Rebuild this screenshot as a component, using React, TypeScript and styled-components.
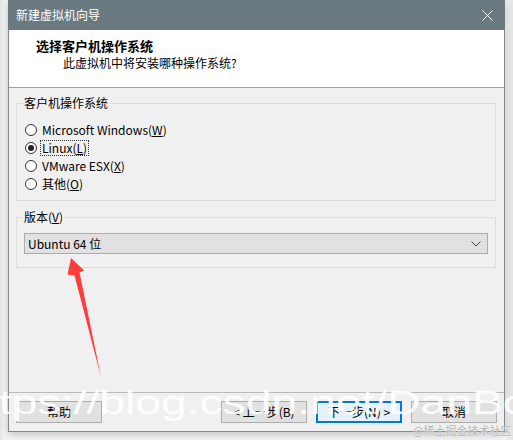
import React from "react";
import styled, { createGlobalStyle } from "styled-components";

const GlobalStyle = createGlobalStyle`
  html, body {
    margin: 0;
    padding: 0;
    background: #ededed;
  }
  body {
    width: 513px;
    height: 440px;
    overflow: hidden;
    font-family: "Noto Sans CJK SC", "Noto Sans", sans-serif;
    color: #000;
  }
`;

const Stage = styled.div`
  position: relative;
  width: 513px;
  height: 440px;
  padding: 0 8px;
  box-sizing: border-box;
  overflow: hidden;
  background: linear-gradient(to right, #e4e4e4, #f4f4f4 4px, #f4f4f4 505px, #e4e4e4);
`;

const Window = styled.div`
  width: 497px;
  height: 432px;
  box-sizing: border-box;
  display: flex;
  flex-direction: column;
  background: #f0f0f0;
  border: 1px solid #7f8b90;
  border-top: none;
  box-shadow: 0 2px 8px rgba(0, 0, 0, 0.22);
`;

const TitleBar = styled.div`
  height: 30px;
  margin: 0 -1px;
  padding: 0 12px 0 8px;
  display: flex;
  align-items: center;
  justify-content: space-between;
  background: #6a7a80;
  color: #fff;
  font-size: 12px;
  line-height: 16px;
`;

const Header = styled.div`
  height: 57px;
  box-sizing: content-box;
  padding-left: 27px;
  background: #fff;
  border-bottom: 1px solid #a0a0a0;
  display: flex;
  flex-direction: column;
`;

const HeadTitle = styled.div`
  margin-top: 8px;
  font-size: 13px;
  font-weight: bold;
  line-height: 16px;
`;

const HeadSub = styled.div`
  margin-top: 1px;
  padding-left: 27px;
  font-size: 12px;
  line-height: 16px;
`;

const Body = styled.div`
  flex: 1;
  display: flex;
  flex-direction: column;
  padding: 8px 8px 0 7px;
`;

const Group = styled.fieldset<{ $gap?: number; $pt: number; $pb: number }>`
  margin: ${(p) => p.$gap ?? 0}px 0 0 0;
  padding: ${(p) => p.$pt}px 7px ${(p) => p.$pb}px 7px;
  border: 1px solid #dcdcdc;
  min-width: 0;
`;

const Legend = styled.legend`
  margin-left: -1px;
  padding: 0 1px;
  font-size: 12px;
  line-height: 14px;
`;

const RadioRow = styled.div`
  height: 18px;
  margin-left: 1px;
  display: flex;
  align-items: center;
  gap: 3px;
  font-size: 12px;
  line-height: 16px;
`;

const RadioDot = styled.span<{ $on?: boolean }>`
  width: 12px;
  height: 12px;
  box-sizing: border-box;
  border: 1px solid #333;
  border-radius: 50%;
  background: #fff;
  display: flex;
  align-items: center;
  justify-content: center;
  &::after {
    content: "";
    width: 6px;
    height: 6px;
    border-radius: 50%;
    background: ${(p) => (p.$on ? "#222" : "transparent")};
  }
`;

const RadioLabel = styled.span<{ $focus?: boolean }>`
  padding: 0 1px;
  border: 1px dotted ${(p) => (p.$focus ? "#333" : "transparent")};
  line-height: 14px;
`;

const Select = styled.div`
  height: 21px;
  box-sizing: border-box;
  padding: 0 6px 0 3px;
  display: flex;
  align-items: center;
  justify-content: space-between;
  background: #e1e1e1;
  border: 1px solid #adadad;
  font-size: 12px;
  line-height: 16px;
`;

const Spacer = styled.div`
  flex: 1;
`;

const Footer = styled.div`
  display: flex;
  align-items: center;
  gap: 9px;
  padding: 8px 7px 8px 7px;
  border-top: 1px solid #b9b9b9;
`;

const Button = styled.div<{ $default?: boolean }>`
  width: 86px;
  height: 22px;
  box-sizing: border-box;
  display: flex;
  align-items: center;
  justify-content: center;
  background: ${(p) => (p.$default ? "#e5f1fb" : "#e1e1e1")};
  border: ${(p) => (p.$default ? "2px solid #0078d7" : "1px solid #adadad")};
  font-size: 12px;
  line-height: 16px;
  &:first-child {
    margin-right: auto;
  }
`;

const Watermark = styled.div`
  position: absolute;
  left: -1px;
  top: 385px;
  font-family: "Liberation Sans", Arial, sans-serif;
  font-size: 34px;
  line-height: 34px;
  white-space: nowrap;
  color: rgba(255, 255, 255, 0.92);
  transform: scaleX(1.36);
  transform-origin: left top;
  pointer-events: none;
`;

const Credit = styled.div`
  position: absolute;
  left: 413px;
  top: 423px;
  font-size: 11px;
  line-height: 14px;
  color: #b5b5b5;
  text-shadow: 0 0 1px #fff;
  white-space: nowrap;
`;

const Overlay = styled.svg`
  position: absolute;
  left: 0;
  top: 0;
  pointer-events: none;
`;

const options = [
  { label: "Microsoft Windows(", key: "W" },
  { label: "Linux(", key: "L", on: true },
  { label: "VMware ESX(", key: "X" },
  { label: "其他(", key: "O" },
];

export default function App() {
  return (
    <Stage>
      <GlobalStyle />
      <Window>
        <TitleBar>
          <span>新建虚拟机向导</span>
          <svg width="11" height="11" viewBox="0 0 11 11">
            <path d="M0.5 0.5 L10.5 10.5 M10.5 0.5 L0.5 10.5" stroke="#fff" strokeWidth="1" />
          </svg>
        </TitleBar>
        <Header>
          <HeadTitle>选择客户机操作系统</HeadTitle>
          <HeadSub>此虚拟机中将安装哪种操作系统?</HeadSub>
        </Header>
        <Body>
          <Group $pt={11} $pb={7}>
            <Legend>客户机操作系统</Legend>
            {options.map((o) => (
              <RadioRow key={o.key}>
                <RadioDot $on={o.on} />
                <RadioLabel $focus={o.on}>
                  {o.label}
                  <u>{o.key}</u>)
                </RadioLabel>
              </RadioRow>
            ))}
          </Group>
          <Group $gap={9} $pt={9} $pb={13}>
            <Legend>
              版本(<u>V</u>)
            </Legend>
            <Select>
              <span>Ubuntu 64 位</span>
              <svg width="10" height="6" viewBox="0 0 10 6">
                <path d="M0.5 0.5 L5 5 L9.5 0.5" fill="none" stroke="#444" strokeWidth="1" />
              </svg>
            </Select>
          </Group>
          <Spacer />
        </Body>
        <Footer>
          <Button>帮助</Button>
          <Button>&lt; 上一步(B)</Button>
          <Button $default>下一步(N) &gt;</Button>
          <Button>取消</Button>
        </Footer>
      </Window>
      <Overlay width="513" height="440" viewBox="0 0 513 440">
        <polygon
          points="71,258 84,270.5 79.5,272.5 101,377 74.5,275.5 67.5,274.5"
          fill="#ff3b3b"
        />
      </Overlay>
      <Watermark>tps://blog.csdn.net/DanBo_C</Watermark>
      <Credit>@稀土掘金技术社区</Credit>
    </Stage>
  );
}
